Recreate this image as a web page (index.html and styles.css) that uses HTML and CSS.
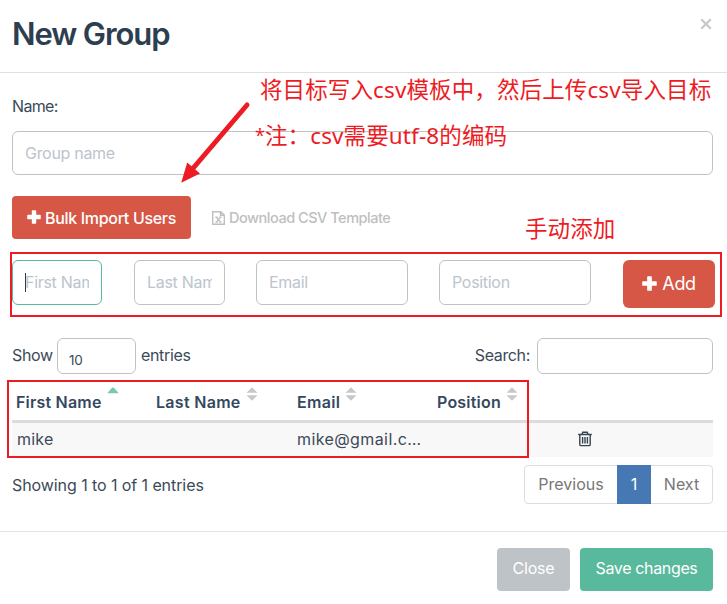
FILE: index.html
```html
<!DOCTYPE html>
<html lang="en">
<head>
<meta charset="utf-8">
<title>New Group</title>
<link rel="stylesheet" href="styles.css">
</head>
<body>
<div class="modal">
  <header class="modal-header">
    <h4 class="title">New Group</h4>
    <button class="dismiss" aria-label="Close"><svg width="12" height="12" viewBox="0 0 12 12"><path d="M1.2 1.2 10.8 10.8M10.8 1.2 1.2 10.8"/></svg></button>
  </header>
  <main class="modal-body">
    <label class="name-label" for="name">Name:</label>
    <input class="field name-field" id="name" placeholder="Group name">
    <div class="import-row">
      <button class="btn danger bulk"><svg class="plus" viewBox="0 0 14 14"><path d="M4.8 1Q4.8.2 5.6.2h2.8Q9.2.2 9.2 1V4.8H13q.8 0 .8.8v2.8q0 .8-.8.8H9.2V13q0 .8-.8.8H5.6q-.8 0-.8-.8V9.2H1Q.2 9.2.2 8.4V5.6Q.2 4.8 1 4.8h3.8z"/></svg><span>Bulk Import Users</span></button>
      <a class="template"><svg width="13" height="14" viewBox="0 0 13 14"><path class="line" d="M.7.7h8L12.3 4v9.3H.7zM8.5.7v3.6h3.8"/><path class="line" d="M4.4 6.4l4 4.6M8.4 6.4 4.4 11M3.3 6.2h2.4M7.2 6.2h2.4M3.3 11.1h2.4M7.2 11.1h2.4"/></svg><span>Download CSV Template</span></a>
    </div>
    <div class="target-row">
      <div class="focus-wrap"><input class="field focused" placeholder="First Name"><i class="caret"></i></div>
      <input class="field" placeholder="Last Name">
      <input class="field" placeholder="Email">
      <input class="field" placeholder="Position">
      <button class="btn danger add"><svg class="plus" viewBox="0 0 14 14"><path d="M4.8 1Q4.8.2 5.6.2h2.8Q9.2.2 9.2 1V4.8H13q.8 0 .8.8v2.8q0 .8-.8.8H9.2V13q0 .8-.8.8H5.6q-.8 0-.8-.8V9.2H1Q.2 9.2.2 8.4V5.6Q.2 4.8 1 4.8h3.8z"/></svg><span>Add</span></button>
    </div>
    <div class="filter-row">
      <label class="length"><span>Show</span><span class="field select">10</span><span>entries</span></label>
      <label class="search"><span>Search:</span><input class="field"></label>
    </div>
    <div class="table">
      <div class="row head">
        <div class="cell"><span>First Name</span><svg class="sort asc" viewBox="0 0 12 14"><path d="M.5 6 5 .8Q6 0 7 .8L11.5 6Q11.5 6.2 11 6.2H1Q.5 6.2.5 6z"/></svg></div>
        <div class="cell"><span class="last-name">Last Name</span><svg class="sort" viewBox="0 0 12 14"><path d="M.5 5.8 6 .2 11.5 5.8zM.5 8.2 6 13.8 11.5 8.2z"/></svg></div>
        <div class="cell"><span class="email-head">Email</span><svg class="sort" viewBox="0 0 12 14"><path d="M.5 5.8 6 .2 11.5 5.8zM.5 8.2 6 13.8 11.5 8.2z"/></svg></div>
        <div class="cell"><span>Position</span><svg class="sort" viewBox="0 0 12 14"><path d="M.5 5.8 6 .2 11.5 5.8zM.5 8.2 6 13.8 11.5 8.2z"/></svg></div>
        <div class="cell"></div>
      </div>
      <div class="row data">
        <div class="cell">mike</div>
        <div class="cell"></div>
        <div class="cell email">mike@gmail.c…</div>
        <div class="cell"></div>
        <div class="cell"><svg class="trash" width="14" height="16" viewBox="0 0 14 16"><path d="M.2 3.5h13.6M4 3.2 4.8 1.2h4.4L10 3.2M1.8 3.8v9.6q0 1.2 1.2 1.2h8q1.2 0 1.2-1.2V3.8M4.6 6v6.5M7 6v6.5M9.4 6v6.5"/></svg></div>
      </div>
    </div>
    <div class="table-footer">
      <span class="info">Showing 1 to 1 of 1 entries</span>
      <nav class="pages"><a>Previous</a><a class="current">1</a><a>Next</a></nav>
    </div>
  </main>
  <footer class="modal-footer">
    <button class="btn close"><span>Close</span></button>
    <button class="btn save"><span>Save changes</span></button>
  </footer>
  <div class="note note-upload" lang="zh">将目标写入csv模板中，然后上传csv导入目标</div>
  <div class="note note-encoding" lang="zh"><span class="star">*</span><span>注：csv需要utf-8的编码</span></div>
  <div class="note note-manual" lang="zh">手动添加</div>
  <svg class="arrow" width="80" height="90" viewBox="0 0 80 90"><path class="shaft" d="M72 10 17 74.5"/><path class="tip" d="M6.2 87.8 12.2 67.5 17.5 72 25 78.6z"/></svg>
  <div class="frame frame-inputs"></div>
  <div class="frame frame-table"></div>
</div>
</body>
</html>
```
FILE: styles.css
```css
* { box-sizing: border-box; }
body {
  margin: 0;
  background: #fff;
  color: #3b4a59;
  font: 16px/24px Inter, "Liberation Sans", sans-serif;
}
button, input { font: inherit; letter-spacing: inherit; margin: 0; }
.modal { position: relative; width: 727px; height: 604px; overflow: hidden; }
.modal-header {
  display: flex;
  justify-content: space-between;
  height: 73px;
  padding: 14px 15px 0 12px;
  border-bottom: 1px solid #e0e0e0;
}
.title { margin: 0; font-size: 31px; line-height: 40px; font-weight: 600; letter-spacing: -1.1px; color: #2c3e50; }
.dismiss { border: 0; padding: 3px 0 0; background: none; height: 18px; }
.dismiss svg { display: block; margin-top: -1px; fill: none; stroke: #c9c9c9; stroke-width: 2.3; }
.modal-body { height: 458px; padding: 21px 14px 0 12px; }
.name-label { display: block; height: 37px; letter-spacing: -.65px; }
.field {
  display: block;
  min-width: 0;
  height: 45px;
  padding: 0 12px;
  border: 1px solid #bdc3c7;
  border-radius: 6px;
  background: transparent;
  color: #3b4a59;
  letter-spacing: -.3px;
  outline: 0;
}
.field::placeholder { color: #bcc4cd; opacity: 1; }
.name-field { width: 701px; height: 44px; }
.import-row { display: flex; align-items: center; height: 43px; margin-top: 21px; gap: 21px; }
.btn {
  display: flex;
  align-items: center;
  justify-content: center;
  border: 0;
  padding: 0;
  border-radius: 4px;
  color: #fff;
  height: 43px;
}
.danger { background: #d65745; }
.bulk { width: 179px; gap: 4px; font-weight: 500; letter-spacing: -.32px; }
.plus { width: 14px; height: 14px; fill: #fff; position: relative; top: -1px; }
.template { display: flex; align-items: center; gap: 4px; color: #bdbfc0; font-size: 14.5px; font-weight: 500; letter-spacing: -.48px; }
.line { fill: none; stroke: #bdbfc0; stroke-width: 1.4; }
.target-row {
  display: grid;
  grid-template-columns: 122px 122px 183px 184px 92px;
  width: 703px;
  margin-top: 21px;
  height: 48px;
}
.target-row .field { width: 152px; padding-bottom: 2px; }
.target-row .focus-wrap { position: relative; width: 90px; }
.target-row .focused { width: 90px; border-color: #59b99c; }
.target-row .focus-wrap + .field { width: 91px; }
.caret { position: absolute; left: 13px; top: 13px; width: 1px; height: 19px; background: #2c3e50; }
.add { height: 48px; border-radius: 6px; gap: 5px; font-size: 18px; letter-spacing: -.4px; }
.add .plus { width: 15px; height: 15px; }
.filter-row { display: flex; justify-content: space-between; margin-top: 30px; height: 36px; }
.length, .search { display: flex; align-items: center; gap: 5px; line-height: 22px; letter-spacing: -.35px; }
.length > span:not(.field), .search > span { padding-bottom: 2px; }
.length span:first-child { width: 40px; }
.length .field { width: 79px; height: 36px; }
.length .select { font-size: 13.5px; line-height: 42px; padding-left: 11px; }
.search { gap: 7px; }
.search .field { width: 176px; height: 36px; }
.table { margin-top: 6px; }
.row { display: grid; grid-template-columns: 140px 140px 141px 116px 1fr; }
.head { height: 43px; border-bottom: 3px solid #dcdcdc; font-weight: 600; color: #34495e; letter-spacing: .2px; }
.data { height: 34px; background: #f8f8f8; letter-spacing: .2px; }
.cell { display: flex; padding-left: 5px; }
.data .email { letter-spacing: .4px; }
.head .cell { padding: 10px 0 0 4px; }
.data .cell { padding-top: 4px; }
.last-name { letter-spacing: .3px; }
.email-head { padding-left: 1px; letter-spacing: .3px; }
.sort { width: 12px; height: 14px; margin: -3px 0 0 5px; fill: #c8c8c8; }
.asc { fill: #7bc7b0; }
.trash { margin: 4px 0 0 24px; fill: none; stroke: #34434f; stroke-width: 1.4; }
.table-footer { display: flex; justify-content: space-between; padding-top: 8px; }
.info { padding-top: 8px; letter-spacing: -.08px; }
.pages { display: flex; width: 189px; height: 39px; border: 1px solid #ddd; border-radius: 4px; color: #777; }
.pages a { flex: 0 0 92px; line-height: 37px; text-align: center; }
.pages .current { flex-basis: 34px; margin: -1px 0; line-height: 39px; background: #4679b4; color: #fff; }
.pages a:last-child { flex: 1; }
.modal-footer {
  display: flex;
  justify-content: flex-end;
  gap: 10px;
  height: 73px;
  padding: 16px 14px 0;
  border-top: 1px solid #e5e5e5;
}
.modal-footer .btn { padding-bottom: 3px; }
.close { width: 73px; background: #bdc3c7; letter-spacing: -.2px; }
.save { width: 133px; background: #59b99c; letter-spacing: -.35px; }
.note {
  position: absolute;
  color: #ed1c24;
  font: 22.5px/30px "Noto Sans", "Noto Sans CJK SC", sans-serif;
  letter-spacing: .12px;
  white-space: nowrap;
}
.note-upload { left: 260px; top: 75px; }
.note-encoding { display: flex; left: 255px; top: 121px; }
.star { width: 10px; font-size: 18px; line-height: 28px; letter-spacing: 0; }
.note-manual { left: 525px; top: 214px; }
.arrow { position: absolute; left: 175px; top: 95px; }
.shaft { stroke: #ed1c24; stroke-width: 5; stroke-linecap: round; }
.tip { fill: #ed1c24; }
.frame { position: absolute; border: 2px solid #ed1c24; }
.frame-inputs { left: 10px; top: 252px; width: 712px; height: 65px; }
.frame-table { left: 7px; top: 380px; width: 522px; height: 78px; }
```
